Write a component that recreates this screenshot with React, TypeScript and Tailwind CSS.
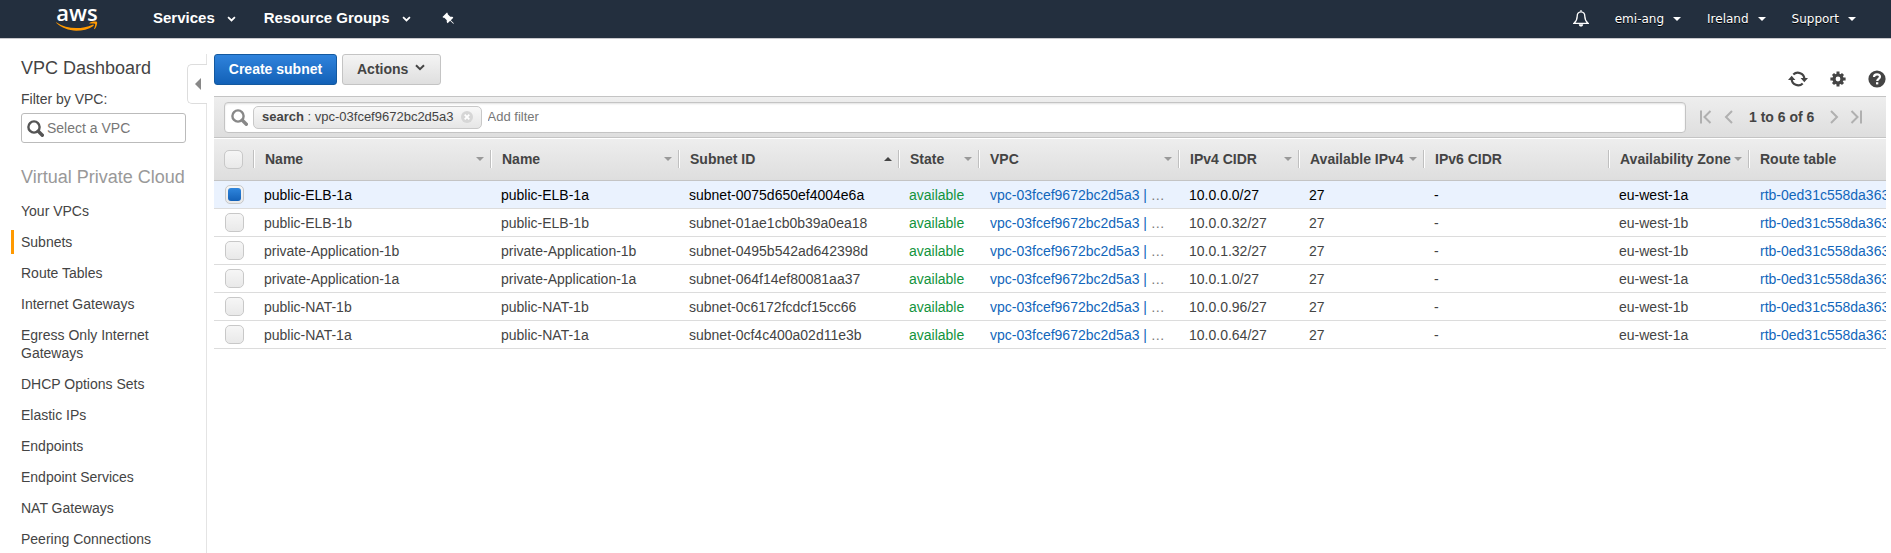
import React from "react";
import { BsPinAngleFill } from "react-icons/bs";

const caretColumns = "h-0 w-0 shrink-0 border-x-4 border-x-transparent";

type Column = { label: string; width: string; sort?: "down" | "up" };

const columns: Column[] = [
  { label: "Name", width: "w-[237px]", sort: "down" },
  { label: "Name", width: "w-[188px]", sort: "down" },
  { label: "Subnet ID", width: "w-[220px]", sort: "up" },
  { label: "State", width: "w-[80px]", sort: "down" },
  { label: "VPC", width: "w-[200px]", sort: "down" },
  { label: "IPv4 CIDR", width: "w-[120px]", sort: "down" },
  { label: "Available IPv4", width: "w-[125px]", sort: "down" },
  { label: "IPv6 CIDR", width: "w-[185px]" },
  { label: "Availability Zone", width: "w-[140px]", sort: "down" },
  { label: "Route table", width: "w-auto" },
];

const subnets = [
  { name: "public-ELB-1a", id: "subnet-0075d650ef4004e6a", cidr: "10.0.0.0/27", zone: "eu-west-1a", selected: true },
  { name: "public-ELB-1b", id: "subnet-01ae1cb0b39a0ea18", cidr: "10.0.0.32/27", zone: "eu-west-1b", selected: false },
  { name: "private-Application-1b", id: "subnet-0495b542ad642398d", cidr: "10.0.1.32/27", zone: "eu-west-1b", selected: false },
  { name: "private-Application-1a", id: "subnet-064f14ef80081aa37", cidr: "10.0.1.0/27", zone: "eu-west-1a", selected: false },
  { name: "public-NAT-1b", id: "subnet-0c6172fcdcf15cc66", cidr: "10.0.0.96/27", zone: "eu-west-1b", selected: false },
  { name: "public-NAT-1a", id: "subnet-0cf4c400a02d11e3b", cidr: "10.0.0.64/27", zone: "eu-west-1a", selected: false },
];

const sidebarLinks = [
  "Your VPCs",
  "Subnets",
  "Route Tables",
  "Internet Gateways",
  "Egress Only Internet Gateways",
  "DHCP Options Sets",
  "Elastic IPs",
  "Endpoints",
  "Endpoint Services",
  "NAT Gateways",
  "Peering Connections",
];

function Chevron({ className }: { className: string }) {
  return (
    <svg viewBox="0 0 10 7" className={className} fill="none" stroke="currentColor" strokeWidth="2" aria-hidden="true">
      <path d="M1 1.2 5 5.2 9 1.2" />
    </svg>
  );
}

function SearchIcon({ className }: { className: string }) {
  return (
    <svg viewBox="0 0 17 17" className={className} fill="none" stroke="currentColor" aria-hidden="true">
      <circle cx="7" cy="7" r="5.6" strokeWidth="2.4" />
      <path d="M11.3 11.3 15.3 15.3" strokeWidth="3.4" strokeLinecap="round" />
    </svg>
  );
}

function Logo() {
  return (
    <a href="#home" aria-label="AWS home" className="flex w-[42px] flex-col items-center pb-[6px]">
      <span className="h-[19px] font-['Open_Sans',sans-serif] text-[22px] leading-[20px] font-semibold text-white">aws</span>
      <svg viewBox="0 0 42 10" className="h-[10px] w-[42px]" aria-hidden="true">
        <path d="M.6 1.4C6 5 13 7.1 20.200 7.100 26 7.100 31.500 5.900 36.600 3.700 37.500 3.300 38.200 4.200 37.400 4.900 32.600 8.200 26.200 9.700 20.300 9.700 12.600 9.700 5.600 6.900 .4 2.100 0 1.700 .2 1.200 .6 1.400Z" fill="#ff9900" />
        <path d="M33.500 1.900C35.800.4 40.400.3 41 1 41.500 1.800 40.800 5.900 38.700 8 38.300 8.300 37.900 8.100 38.100 7.600 38.700 6.300 39.500 3.500 39.100 2.900 38.600 2.300 35.500 2.300 34 2.500 33.400 2.600 33.100 2.200 33.500 1.900Z" fill="#ff9900" />
      </svg>
    </a>
  );
}

function TopMenu({ label }: { label: string }) {
  return (
    <button type="button" className="flex items-center gap-[9px] text-[12px] leading-[16px] text-white [text-shadow:0_1px_0_#000]">
      {label}
      <span className={`${caretColumns} border-t-4 border-t-white`} />
    </button>
  );
}

function Header() {
  return (
    <header className="flex h-[39px] items-center border-b border-[#c8c8cc] bg-[#232f3e] pr-[35px] pl-[56px]">
      <Logo />
      <nav className="ml-[55px] flex items-center pb-[2px] text-[15px] leading-[18px] font-bold text-white [text-shadow:0_1px_0_#000]">
        <button type="button" className="flex items-center gap-[12px]">
          Services
          <Chevron className="mt-[2px] h-[6px] w-[9px]" />
        </button>
        <button type="button" className="ml-[28px] flex items-center gap-[12px]">
          Resource Groups
          <Chevron className="mt-[2px] h-[6px] w-[9px]" />
        </button>
        <button type="button" aria-label="Pin shortcuts" className="ml-[31px]">
          <BsPinAngleFill className="h-[13px] w-[13px] -scale-x-100" aria-hidden="true" />
        </button>
      </nav>
      <div className="ml-auto flex items-center gap-[26px] pb-[1px] font-['DejaVu_Sans',sans-serif]">
        <button type="button" aria-label="Notifications" className="text-white">
          <svg viewBox="0 0 16 17" className="h-[17px] w-[16px]" fill="none" stroke="currentColor" strokeWidth="1.300" aria-hidden="true">
            <path d="M8 1.800C5.300 1.800 4.200 3.800 4.200 6.200 4.200 9.600 3 11.600 1 13.300H15C13 11.600 11.800 9.600 11.800 6.200 11.800 3.800 10.700 1.800 8 1.800Z" />
            <path d="M7.200.3H8.800V1.500H7.200ZM5.800 14.200H10.200C10.200 17.300 5.800 17.300 5.800 14.200Z" fill="currentColor" stroke="none" />
          </svg>
        </button>
        <TopMenu label="emi-ang" />
        <TopMenu label="Ireland" />
        <TopMenu label="Support" />
      </div>
    </header>
  );
}

function Sidebar() {
  return (
    <aside className="relative mt-[15px] w-[207px] shrink-0 border-r border-[#e4e4e4] pl-[11px]">
      <button
        type="button"
        aria-label="Collapse navigation"
        className="absolute top-[10px] -right-px flex h-[40px] w-[20px] items-center justify-center rounded-l-[5px] border border-r-0 border-[#ddd] bg-white"
      >
        <span className="h-0 w-0 border-y-[6px] border-r-[6px] border-y-transparent border-r-[#888]" />
      </button>
      <div className="w-[175px] pl-[10px]">
        <h1 className="pt-[3px] text-[18px] leading-[22px]">VPC Dashboard</h1>
        <label htmlFor="vpc-filter" className="mt-[11px] block leading-[18px]">
          Filter by VPC:
        </label>
        <div className="mt-[5px] flex h-[30px] items-center gap-[3px] rounded-[3px] border border-[#bbb] bg-white pr-1 pl-[5px]">
          <SearchIcon className="h-[17px] w-[17px] shrink-0 text-[#555]" />
          <input
            id="vpc-filter"
            type="text"
            placeholder="Select a VPC"
            className="w-full min-w-0 bg-transparent text-[14px] leading-[18px] outline-none placeholder:text-[#777]"
          />
        </div>
        <h2 className="mt-[22px] text-[18px] leading-[24px] whitespace-nowrap text-[#999]">Virtual Private Cloud</h2>
      </div>
      <ul className="mt-[10px] flex flex-col gap-[7px]">
        {sidebarLinks.map((label) => (
          <li key={label}>
            <a
              href="#section"
              className={`block w-[172px] border-l-[3px] py-[3px] pl-[7px] leading-[18px] ${
                label === "Subnets" ? "border-[#ff9900]" : "border-transparent"
              }`}
            >
              {label}
            </a>
          </li>
        ))}
      </ul>
    </aside>
  );
}

function GridCheckbox({ label, checked }: { label: string; checked?: boolean }) {
  return (
    <input
      type="checkbox"
      aria-label={label}
      defaultChecked={checked}
      className="block h-[19px] w-[19px] appearance-none rounded-[5px] border border-[#c8c8c8] bg-linear-to-b from-[#f6f6f6] to-[#e9e9e9] bg-clip-padding p-[2px] before:block before:h-full before:w-full before:rounded-[3px] checked:before:bg-linear-to-b checked:before:from-[#2f86dd] checked:before:to-[#1361b8]"
    />
  );
}

function PagerIcon({ d }: { d: string }) {
  return (
    <svg viewBox="0 0 12 14" className="h-[14px] w-[12px]" fill="none" stroke="currentColor" strokeWidth="2" aria-hidden="true">
      <path d={d} />
    </svg>
  );
}

function Toolbar() {
  return (
    <div className="flex items-start">
      <button
        type="button"
        className="h-[31px] w-[123px] rounded-[3px] border border-[#14599f] bg-linear-to-b from-[#2f83dc] to-[#1261b7] pb-[1px] text-[14px] leading-[18px] font-bold text-white"
      >
        Create subnet
      </button>
      <button
        type="button"
        className="ml-[5px] flex h-[31px] w-[99px] items-center rounded-[3px] border border-[#c4c4c4] bg-linear-to-b from-[#f4f4f4] to-[#dfdfdf] pb-[1px] pl-[14px] text-[14px] leading-[18px] font-bold"
      >
        Actions
        <Chevron className="mb-[3px] ml-[7px] h-[7px] w-[10px]" />
      </button>
      <div className="mt-[16px] ml-auto flex items-center gap-[22px]">
        <button type="button" aria-label="Refresh">
          <svg viewBox="0 0 20 18" className="h-[18px] w-[20px]" fill="none" stroke="currentColor" strokeWidth="2.200" aria-hidden="true">
            <path d="M5.300 4.500A6.600 6.600 0 0 1 16.400 9M14.700 13.500A6.600 6.600 0 0 1 3.600 9" />
            <path d="M12.600 8H20L16.300 12.200ZM0 10H7.400L3.700 5.800Z" fill="currentColor" stroke="none" />
          </svg>
        </button>
        <button type="button" aria-label="Settings">
          <svg viewBox="0 0 16 16" className="h-[16px] w-[16px]" fill="none" stroke="currentColor" aria-hidden="true">
            <circle cx="8" cy="8" r="4" strokeWidth="3.200" />
            <path d="M8 .4V4M8 12V15.600M.4 8H4M12 8H15.600M3 3 5 5M11 11 13 13M3 13 5 11M11 5 13 3" strokeWidth="3" />
          </svg>
        </button>
        <button type="button" aria-label="Help">
          <svg viewBox="0 0 18 18" className="h-[18px] w-[18px]" aria-hidden="true">
            <circle cx="9" cy="9" r="8.600" fill="currentColor" />
            <path d="M6 7C6 3.400 12 3.500 12 6.800 12 8.900 9.200 8.800 9.200 11" fill="none" stroke="#fff" strokeWidth="2.200" />
            <path d="M8 12.200H10.300V14.400H8Z" fill="#fff" />
          </svg>
        </button>
      </div>
    </div>
  );
}

function FilterBar() {
  return (
    <div className="flex h-[41px] items-center border-t border-[#c4c4c4] bg-linear-to-b from-[#eeeeee] to-[#dedede] pl-[10px]">
      <div className="flex h-[31px] flex-1 items-center rounded-[4px] border border-[#c4c4c4] bg-white pl-[6px] text-[13px] leading-[16px] shadow-[inset_0_1px_2px_rgba(0,0,0,0.12)]">
        <SearchIcon className="h-[17px] w-[17px] shrink-0 text-[#888]" />
        <div className="ml-[5px] flex h-[23px] shrink-0 items-center rounded-[5px] border border-[#c8c8c8] bg-linear-to-b from-[#f8f8f8] to-[#e6e6e6] px-[8px]">
          <span className="whitespace-pre">
            <b>search</b> : vpc-03fcef9672bc2d5a3
          </span>
          <button type="button" aria-label="Remove filter" className="ml-[7px]">
            <svg viewBox="0 0 12 12" className="h-[12px] w-[12px]" aria-hidden="true">
              <circle cx="6" cy="6" r="6" fill="#d6d6d6" />
              <path d="M3.700 3.700 8.300 8.300M8.300 3.700 3.700 8.300" stroke="#fff" strokeWidth="1.800" />
            </svg>
          </button>
        </div>
        <input
          type="text"
          aria-label="Add filter"
          placeholder="Add filter"
          className="ml-[6px] min-w-0 flex-1 bg-transparent outline-none placeholder:text-[#777]"
        />
      </div>
      <div className="flex w-[200px] shrink-0 items-center pl-[14px] text-[#b0b0b0]">
        <button type="button" aria-label="First page">
          <PagerIcon d="M1 .5V13.500M10.500 1 4.500 7 10.500 13" />
        </button>
        <button type="button" aria-label="Previous page" className="ml-[11px]">
          <PagerIcon d="M9 1 3 7 9 13" />
        </button>
        <span className="ml-[14px] font-bold text-[#444]">1 to 6 of 6</span>
        <button type="button" aria-label="Next page" className="ml-[14px]">
          <PagerIcon d="M3 1 9 7 3 13" />
        </button>
        <button type="button" aria-label="Last page" className="ml-[10px]">
          <PagerIcon d="M1.500 1 7.500 7 1.500 13M11 .5V13.500" />
        </button>
      </div>
    </div>
  );
}

function SubnetTable() {
  return (
    <table className="w-full table-fixed border-separate border-spacing-0 text-left">
      <thead>
        <tr className="h-[44px]">
          <th className="w-[39px] border-t border-b border-[#c4c4c4] bg-linear-to-b from-[#eeeeee] to-[#dedede] p-0 pl-[10px] shadow-[inset_0_1px_0_#fff]">
            <GridCheckbox label="Select all subnets" />
          </th>
          {columns.map((column, index) => (
            <th
              key={index}
              className={`${column.width} border-t border-b border-[#c4c4c4] bg-linear-to-b from-[#eeeeee] to-[#dedede] p-0 shadow-[inset_0_1px_0_#fff]`}
            >
              <div className="flex h-[18px] items-center border-l border-[#c0c0c0] pr-[6px] pl-[11px] leading-[18px] whitespace-nowrap shadow-[inset_1px_0_0_#fff]">
                <span className="min-w-0 flex-1">{column.label}</span>
                {column.sort === "down" && <span className={`${caretColumns} border-t-4 border-t-[#999]`} />}
                {column.sort === "up" && <span className={`${caretColumns} border-b-4 border-b-[#444]`} />}
              </div>
            </th>
          ))}
        </tr>
      </thead>
      <tbody>
        {subnets.map((subnet) => (
          <tr
            key={subnet.id}
            className={`h-[28px] *:overflow-hidden *:border-b *:border-[#dcdcdc] *:p-0 *:leading-[18px] *:whitespace-nowrap ${
              subnet.selected ? "bg-[#eaf2fe] text-black" : ""
            }`}
          >
            <td>
              <div className="pl-[11px]">
                <GridCheckbox label={`Select ${subnet.id}`} checked={subnet.selected} />
              </div>
            </td>
            <td><div className="pl-[11px]">{subnet.name}</div></td>
            <td><div className="pl-[11px]">{subnet.name}</div></td>
            <td><div className="pl-[11px]">{subnet.id}</div></td>
            <td><div className="pl-[11px] text-[#11933c]">available</div></td>
            <td>
              <div className="pl-[12px] text-[#777]">
                <a href="#vpc" className="text-[#1166bb]">vpc-03fcef9672bc2d5a3 |</a> …
              </div>
            </td>
            <td><div className="pl-[11px]">{subnet.cidr}</div></td>
            <td><div className="pl-[11px]">27</div></td>
            <td><div className="pl-[11px]">-</div></td>
            <td><div className="pl-[11px]">{subnet.zone}</div></td>
            <td>
              <div className="pl-[12px]">
                <a href="#route-table" className="text-[#1166bb]">rtb-0ed31c558da363</a>
              </div>
            </td>
          </tr>
        ))}
      </tbody>
    </table>
  );
}

export default function App() {
  return (
    <div className="flex min-h-screen flex-col bg-white font-['Liberation_Sans',Arial,sans-serif] text-[14px] text-[#444]">
      <Header />
      <div className="flex flex-1">
        <Sidebar />
        <main className="min-w-0 flex-1 pt-[15px] pr-[5px] pl-[7px]">
          <Toolbar />
          <div className="mt-[8px]">
            <FilterBar />
            <SubnetTable />
          </div>
        </main>
      </div>
    </div>
  );
}
